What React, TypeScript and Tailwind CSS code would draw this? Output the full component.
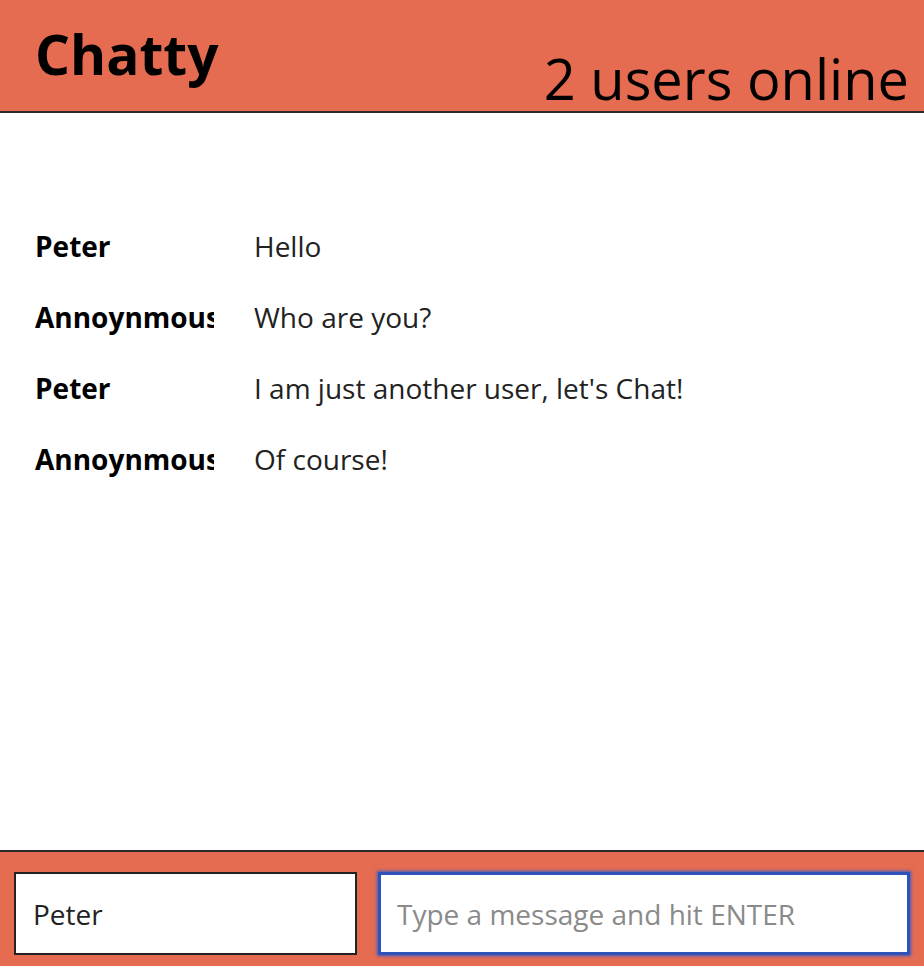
import React from "react";

type Message = { id: number; username: string; content: string };

const messages: Message[] = [
  { id: 1, username: "Peter", content: "Hello" },
  { id: 2, username: "Annoynmous", content: "Who are you?" },
  { id: 3, username: "Peter", content: "I am just another user, let's Chat!" },
  { id: 4, username: "Annoynmous", content: "Of course!" },
];

const App: React.FC = () => {
  return (
    <div className="h-[966px] w-[924px] flex flex-col overflow-hidden bg-white font-['Open_Sans',sans-serif] text-black">
      <nav className="h-[113px] shrink-0 flex items-start justify-between bg-[#e56b51] border-b-2 border-[#2a2a2a] pl-[35px] pr-[15px]">
        <h1 className="text-[55px] font-bold leading-none mt-[26px]">Chatty</h1>
        <span className="text-[56px] leading-none mt-[50px]">2 users online</span>
      </nav>

      <main className="flex-1 pt-[97px] px-[35px]">
        {messages.map((m) => (
          <div key={m.id} className="flex items-center h-[71px] text-[28px]">
            <span className="w-[179px] shrink-0 overflow-hidden whitespace-nowrap font-bold">
              {m.username}
            </span>
            <span className="ml-[40px] text-[#222]">{m.content}</span>
          </div>
        ))}
      </main>

      <footer className="h-[116px] shrink-0 flex gap-[21px] bg-[#e56b51] border-t-2 border-[#2a2a2a] px-[14px] pt-[20px]">
        <input
          className="w-[343px] h-[83px] bg-white border-2 border-[#222] px-[17px] text-[28px] text-[#222] outline-none"
          defaultValue="Peter"
        />
        <input
          className="flex-1 h-[83px] bg-white border-[3px] border-[#2f52b8] px-[16px] text-[28px] outline-none shadow-[0_0_3px_1px_#3a5fc8] placeholder:text-[#8a8a8a]"
          placeholder="Type a message and hit ENTER"
        />
      </footer>
    </div>
  );
};

export default App;
